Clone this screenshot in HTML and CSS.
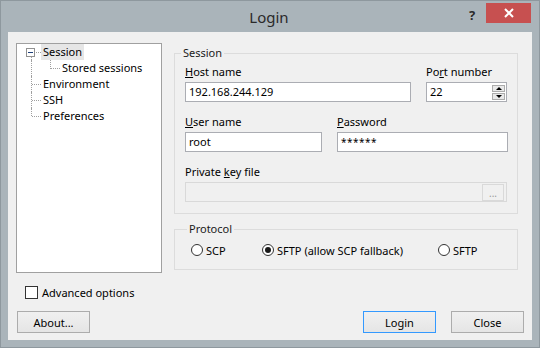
FILE: index.html
```html
<!DOCTYPE html>
<html lang="en">
  <head>
    <meta charset="UTF-8">
    <title>Login</title>
    <link rel="stylesheet" href="styles.css">
  </head>
  <body>
    <div class="window">
      <div class="titlebar">
        <span class="title">Login</span>
        <span class="help">?</span>
        <span class="close">
          <svg width="10" height="10" viewBox="0 0 10 10"><path d="M1 1 L9 9 M9 1 L1 9" stroke="#fff" stroke-width="2"/></svg>
        </span>
      </div>
      <div class="client">
        <div class="top-row">
          <div class="tree">
            <div class="node root"><span class="expander"></span><span class="label selected">Session</span></div>
            <div class="node child"><span class="sub"></span><span class="label">Stored sessions</span></div>
            <div class="node"><span class="label">Environment</span></div>
            <div class="node"><span class="label">SSH</span></div>
            <div class="node last"><span class="label">Preferences</span></div>
          </div>
          <div class="panel">
            <fieldset class="group session">
              <legend>Session</legend>
              <div class="row">
                <div class="field host">
                  <label><u>H</u>ost name</label>
                  <div class="input">192.168.244.129</div>
                </div>
                <div class="field port">
                  <label>Po<u>r</u>t number</label>
                  <div class="input spin">22
                    <span class="spinner">
                      <span class="arrow up"></span>
                      <span class="arrow down"></span>
                    </span>
                  </div>
                </div>
              </div>
              <div class="row">
                <div class="field user">
                  <label><u>U</u>ser name</label>
                  <div class="input">root</div>
                </div>
                <div class="field pass">
                  <label><u>P</u>assword</label>
                  <div class="input stars">******</div>
                </div>
              </div>
              <div class="row">
                <div class="field key">
                  <label>Private <u>k</u>ey file</label>
                  <div class="input disabled"><span class="browse">...</span></div>
                </div>
              </div>
            </fieldset>
            <fieldset class="group protocol">
              <legend>Protocol</legend>
              <div class="radios">
                <span class="radio-item first"><span class="radio"></span>SCP</span>
                <span class="radio-item second"><span class="radio checked"></span>SFTP (allow SCP fallback)</span>
                <span class="radio-item"><span class="radio"></span>SFTP</span>
              </div>
            </fieldset>
          </div>
        </div>
        <div class="check-row">
          <span class="checkbox"></span>Advanced options
        </div>
        <div class="button-row">
          <button class="btn">About...</button>
          <span class="spacer"></span>
          <button class="btn default">Login</button>
          <button class="btn">Close</button>
        </div>
      </div>
    </div>
  </body>
</html>
```

FILE: styles.css
```css
body {
  margin: 0;
  font-family: "Noto Sans", "Open Sans", sans-serif;
  font-size: 11px;
  color: #000;
}

.window {
  width: 540px;
  height: 348px;
  box-sizing: border-box;
  background-color: #aab4ba;
  border: 1px solid #8e989e;
}

.titlebar {
  height: 31px;
  position: relative;
  display: flex;
  justify-content: center;
  align-items: center;
}

.title {
  font-size: 15px;
  color: #2a2a2a;
  margin-left: -2px;
}

.help {
  position: absolute;
  left: 468px;
  top: 5px;
  font-size: 13px;
  font-weight: bold;
  color: #2a2a2a;
}

.close {
  position: absolute;
  left: 485px;
  top: 2px;
  width: 45px;
  height: 20px;
  background-color: #c75050;
  display: flex;
  justify-content: center;
  align-items: center;
}

.client {
  margin: 0 7px;
  height: 308px;
  box-sizing: border-box;
  background-color: #f0f0f0;
  padding: 11px 8px 7px 8px;
  display: flex;
  flex-direction: column;
}

.top-row {
  display: flex;
  height: 230px;
}

/* tree view */
.tree {
  width: 146px;
  box-sizing: border-box;
  border: 1px solid #a0a0a0;
  background-color: #fff;
}

.node {
  position: relative;
  height: 16px;
  line-height: 16px;
  padding-left: 24px;
}

.node::before {
  content: "";
  position: absolute;
  left: 14px;
  top: 0;
  bottom: 0;
  border-left: 1px dotted #a0a0a0;
}

.node::after {
  content: "";
  position: absolute;
  left: 15px;
  top: 8px;
  width: 9px;
  border-top: 1px dotted #a0a0a0;
}

.node.root::before {
  top: 13px;
}

.node.root::after {
  left: 19px;
  width: 5px;
}

.node.child::after {
  display: none;
}

.node.last::before {
  bottom: 8px;
}

.expander {
  position: absolute;
  left: 9px;
  top: 4px;
  width: 9px;
  height: 9px;
  box-sizing: border-box;
  border: 1px solid #919191;
  background-color: #fff;
}

.expander::after {
  content: "";
  position: absolute;
  left: 1px;
  top: 3px;
  width: 5px;
  height: 1px;
  background-color: #1e3f7a;
}

.node.child .label {
  margin-left: 19px;
}

.sub {
  position: absolute;
  left: 33px;
  top: 0;
  width: 9px;
  height: 8px;
  border-left: 1px dotted #a0a0a0;
  border-bottom: 1px dotted #a0a0a0;
}

.label {
  display: inline-block;
  padding: 0 2px;
  height: 16px;
}

.label.selected {
  background-color: #e6e6e6;
}

/* right side */
.panel {
  margin-left: 12px;
  width: 344px;
}

.group {
  margin: 0;
  border: 1px solid #dcdcdc;
  padding: 3px 9px 11px 10px;
}

.group legend {
  padding: 0 2px;
  margin-left: -4px;
  line-height: 16px;
  color: #1a1a1a;
}

.session {
  margin-top: 2px;
}

.row {
  display: flex;
  gap: 15px;
}

.row + .row {
  margin-top: 12px;
}

.field label {
  display: block;
  line-height: 16px;
  margin-bottom: 2px;
}

.input {
  height: 20px;
  box-sizing: border-box;
  border: 1px solid #abadb3;
  background-color: #fff;
  padding: 0 3px;
  line-height: 18px;
  position: relative;
}

.host {
  width: 226px;
}

.port {
  width: 81px;
}

.user {
  width: 137px;
}

.pass {
  width: 171px;
}

.key {
  width: 322px;
}

.stars {
  font-size: 10px;
  letter-spacing: 0.5px;
}

.spin {
  display: flex;
  justify-content: space-between;
  align-items: center;
  padding-right: 1px;
}

.spinner {
  display: flex;
  flex-direction: column;
  gap: 1px;
}

.arrow {
  width: 13px;
  height: 7px;
  box-sizing: border-box;
  border: 1px solid #acacac;
  background-color: #e9e9e9;
  display: flex;
  justify-content: center;
  align-items: center;
}

.arrow::after {
  content: "";
  border-left: 3px solid transparent;
  border-right: 3px solid transparent;
}

.arrow.up::after {
  border-bottom: 3px solid #000;
}

.arrow.down::after {
  border-top: 3px solid #000;
}

.input.disabled {
  background-color: #f0f0f0;
  border-color: #d9d9d9;
  display: flex;
  justify-content: flex-end;
  align-items: center;
  padding-right: 2px;
}

.browse {
  width: 22px;
  height: 17px;
  box-sizing: border-box;
  border: 1px solid #d9d9d9;
  color: #9a9a9a;
  font-size: 10px;
  line-height: 17px;
  text-align: center;
}

.protocol {
  margin-top: 7px;
  padding: 6px 9px 12px 16px;
}

.radios {
  display: flex;
  align-items: center;
  height: 14px;
}

.radio-item {
  display: flex;
  align-items: center;
  gap: 3px;
}

.radio-item.first {
  width: 71px;
}

.radio-item.second {
  width: 176px;
}

.radio {
  width: 12px;
  height: 12px;
  box-sizing: border-box;
  border: 1px solid #333;
  border-radius: 50%;
  background-color: #fff;
  display: flex;
  justify-content: center;
  align-items: center;
}

.radio.checked::after {
  content: "";
  width: 6px;
  height: 6px;
  border-radius: 50%;
  background-color: #1a1a1a;
}

/* bottom */
.check-row {
  margin-top: 13px;
  height: 13px;
  display: flex;
  align-items: center;
  gap: 4px;
  padding-left: 9px;
}

.checkbox {
  width: 13px;
  height: 13px;
  box-sizing: border-box;
  border: 1px solid #333;
  background-color: #fff;
}

.button-row {
  margin-top: 12px;
  display: flex;
  gap: 15px;
  padding-left: 1px;
}

.spacer {
  flex: 1;
}

.btn {
  width: 73px;
  height: 22px;
  box-sizing: border-box;
  border: 1px solid #acacac;
  background: linear-gradient(#f0f0f0, #e5e5e5);
  font-family: inherit;
  font-size: 11px;
  color: #000;
  padding: 0;
}

.btn.default {
  border-color: #3399ff;
}
```
